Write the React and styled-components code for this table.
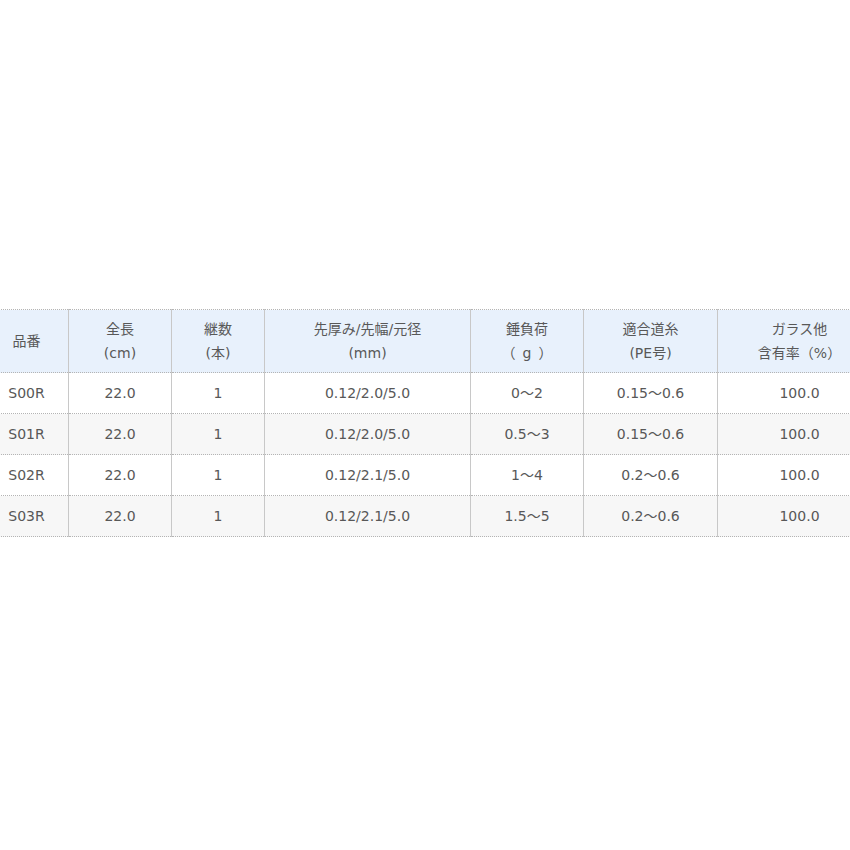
import React from "react";
import styled, { createGlobalStyle } from "styled-components";

const Global = createGlobalStyle`
  html, body { margin: 0; padding: 0; overflow: hidden; background: #fff; }
  body { font-family: "DejaVu Sans", "Noto Sans CJK JP", sans-serif; }
`;

const Page = styled.div`
  width: 850px;
  height: 850px;
  padding-top: 309px;
  box-sizing: border-box;
  overflow: hidden;
`;

const Table = styled.table`
  border-collapse: collapse;
  table-layout: fixed;
  width: 897px;
  margin-left: -16px;
  border-top: 1px dotted #b4b4b4;
  color: #585858;
  font-size: 14px;
  line-height: 24px;
`;

const Th = styled.th`
  font-weight: normal;
  background: #e8f1fc;
  padding: 7px 4px;
  text-align: center;
  border-left: 1px solid #c8c8c8;
  border-right: 1px solid #c8c8c8;
  border-bottom: 1px dotted #b4b4b4;
  white-space: nowrap;
`;

const Tr = styled.tr`
  background: ${(p) => (p.$striped ? "#f7f7f7" : "#ffffff")};
`;

const Td = styled.td`
  padding: 8px 4px;
  text-align: center;
  border-left: 1px solid #c8c8c8;
  border-right: 1px solid #c8c8c8;
  border-bottom: 1px dotted #b4b4b4;
  white-space: nowrap;
`;

const widths = [84, 103, 93, 206, 113, 134, 164];

const headers = [
  ["品番"],
  ["全長", "(cm)"],
  ["継数", "(本)"],
  ["先厚み/先幅/元径", "(mm)"],
  ["錘負荷", "（\u2002g\u2002）"],
  ["適合道糸", "(PE号)"],
  ["ガラス他", "含有率（%）"],
];

const rows = [
  ["S00R", "22.0", "1", "0.12/2.0/5.0", "0～2", "0.15～0.6", "100.0"],
  ["S01R", "22.0", "1", "0.12/2.0/5.0", "0.5～3", "0.15～0.6", "100.0"],
  ["S02R", "22.0", "1", "0.12/2.1/5.0", "1～4", "0.2～0.6", "100.0"],
  ["S03R", "22.0", "1", "0.12/2.1/5.0", "1.5～5", "0.2～0.6", "100.0"],
];

export default function App() {
  return (
    <Page>
      <Global />
      <Table>
        <colgroup>
          {widths.map((w, i) => (
            <col key={i} style={{ width: w }} />
          ))}
        </colgroup>
        <thead>
          <tr>
            {headers.map((h, i) => (
              <Th key={i}>
                {h.map((line, j) => (
                  <React.Fragment key={j}>
                    {j > 0 && <br />}
                    {line}
                  </React.Fragment>
                ))}
              </Th>
            ))}
          </tr>
        </thead>
        <tbody>
          {rows.map((r, i) => (
            <Tr key={i} $striped={i % 2 === 1}>
              {r.map((c, j) => (
                <Td key={j}>{c}</Td>
              ))}
            </Tr>
          ))}
        </tbody>
      </Table>
    </Page>
  );
}
